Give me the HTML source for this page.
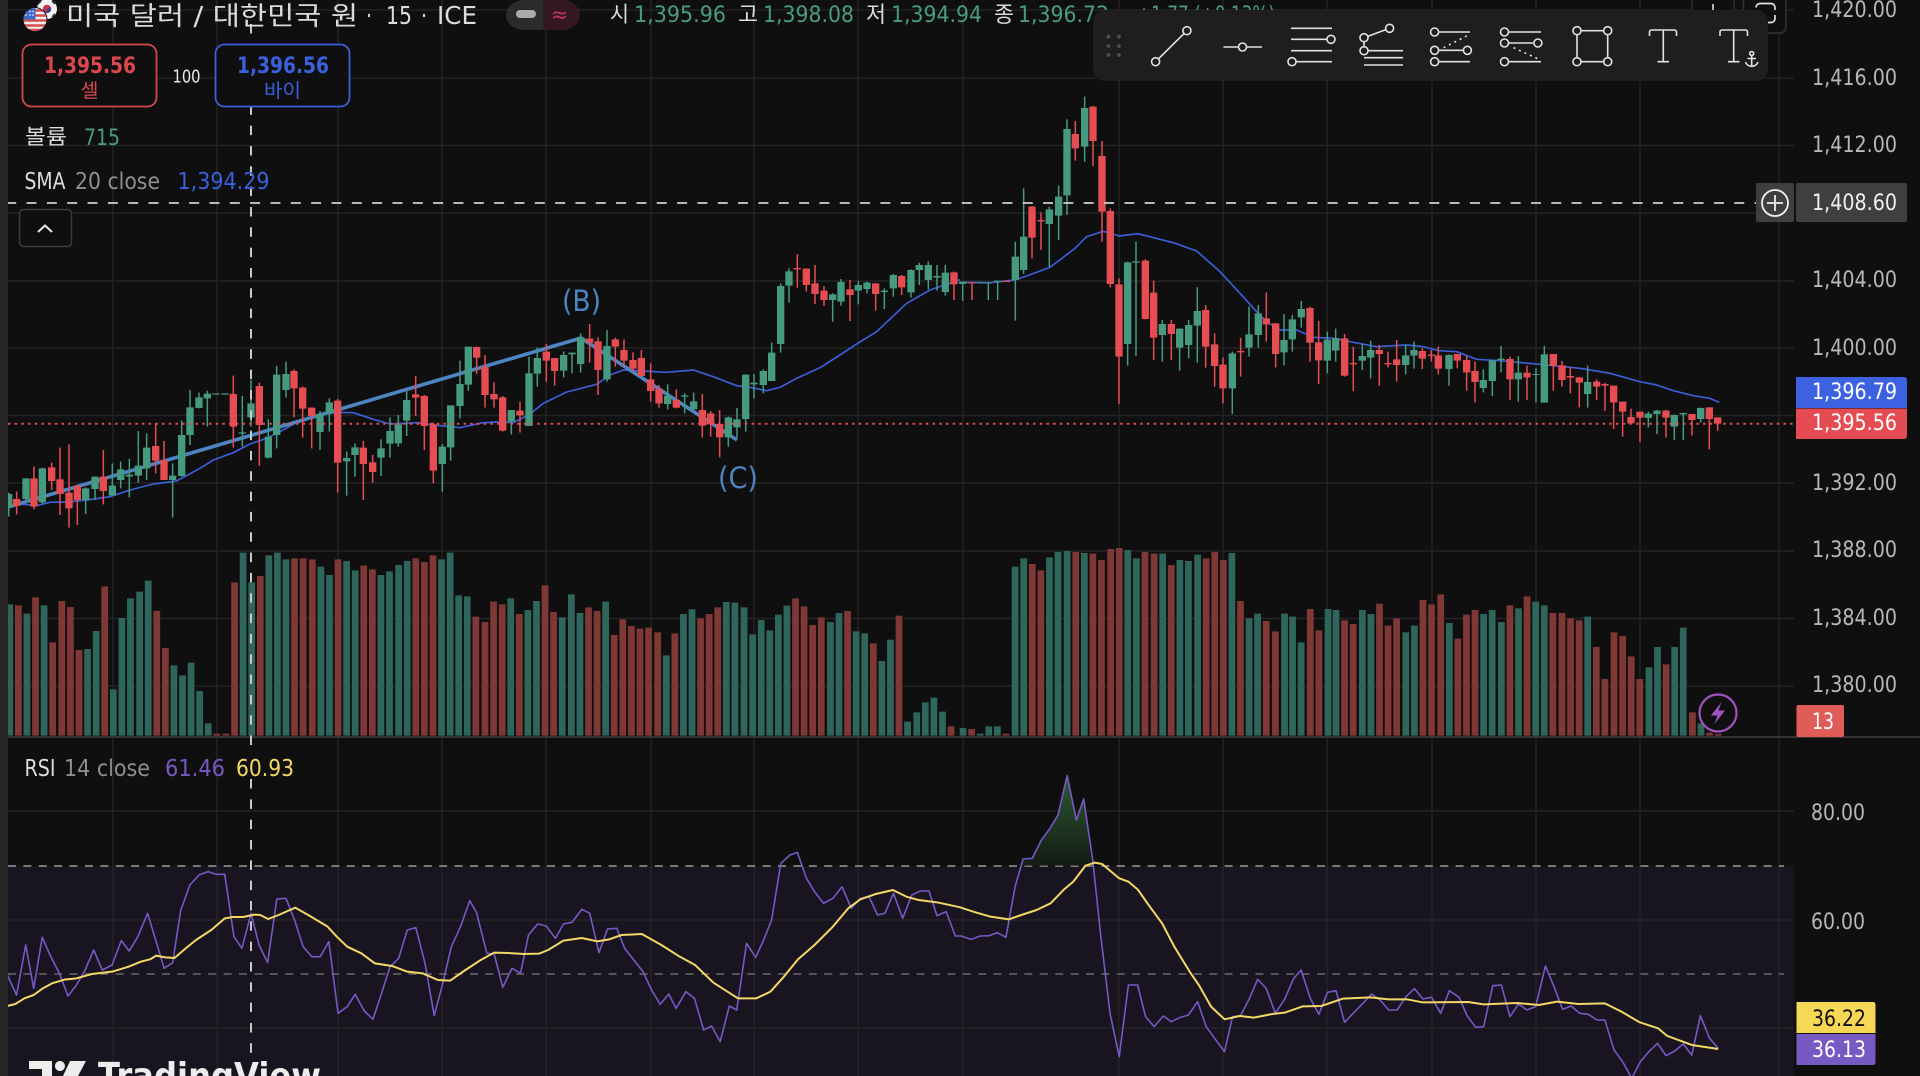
<!DOCTYPE html>
<html lang="ko">
<head>
<meta charset="utf-8">
<title>미국 달러 / 대한민국 원</title>
<style>
html,body{margin:0;padding:0;background:#0f0f0f;width:1920px;height:1076px;overflow:hidden}
svg{display:block;filter:blur(.35px)}
text{font-family:"DejaVu Sans","Noto Sans CJK KR",sans-serif}
.gw{fill:none;stroke:#459a80;stroke-width:4.5}
.gb{fill:none;stroke:#459a80;stroke-width:22}
.rw{fill:none;stroke:#e64d53;stroke-width:4.5}
.rb{fill:none;stroke:#e64d53;stroke-width:22}
.sma{fill:none;stroke:#3a5fd8;stroke-width:5;stroke-linejoin:round}
.vg{fill:none;stroke:#2e665b;stroke-width:11}
.vr{fill:none;stroke:#7f3835;stroke-width:11}
.rsi{fill:none;stroke:#7659c4;stroke-width:1.6;vector-effect:non-scaling-stroke;stroke-linejoin:round}
.rma{fill:none;stroke:#f4d865;stroke-width:2;vector-effect:non-scaling-stroke;stroke-linejoin:round}
.ic{fill:none;stroke:#e2e2e2;stroke-width:1.6}
.ic circle{fill:#1e1e1e}
.ax{fill:#b8b8b8;font-size:22px}
</style>
</head>
<body>
<svg width="1920" height="1076" viewBox="0 0 1920 1076" xmlns="http://www.w3.org/2000/svg">
<defs>
<linearGradient id="ob" x1="0" y1="0" x2="0" y2="1"><stop offset="0" stop-color="#2b5a33"/><stop offset="1" stop-color="#141b14"/></linearGradient>
</defs>
<rect width="1920" height="1076" fill="#0f0f0f"/>
<rect x="8" y="866" width="1786" height="210" fill="#181420"/>

<!-- vertical grid -->
<path stroke="#232323" stroke-width="1.5" fill="none" d="M113 0V1076M217 0V1076M338 0V1076M442 0V1076M546 0V1076M651 0V1076M754 0V1076M858 0V1076M963 0V1076M1119 0V1076M1223 0V1076M1327 0V1076M1432 0V1076M1536 0V1076M1640 0V1076M1779 0V1076"/>
<!-- horizontal grid -->
<path stroke="#242424" stroke-width="1.5" fill="none" d="M8 10H1794M8 78H1794M8 145.500H1794M8 213H1794M8 281H1794M8 348H1794M8 415.500H1794M8 483H1794M8 551H1794M8 618.500H1794M8 686H1794M8 811H1794M8 920H1794M8 1028H1794"/>

<!-- volume -->
<g transform="translate(0,540) scale(.6124,.33333)">
<path class="vg" d="M16 587V193M44 587V221M72 587V196M143 587V327M157 587V273M185 587V448M199 587V234M213 587V175M228 587V155M242 587V122M284 587V376M298 587V406M312 587V368M326 587V453M340 587V550M397 587V38M411 587V127M439 587V46M453 587V38M467 587V58M524 587V80M538 587V105M566 587V63M580 587V91M622 587V105M636 587V94M651 587V75M665 587V63M721 587V58M735 587V38M749 587V166M763 587V169M834 587V175M862 587V210M876 587V183M918 587V232M933 587V163M947 587V219M989 587V185M1088 587V346M1116 587V222M1130 587V208M1186 587V186M1200 587V188M1215 587V202M1229 587V283M1243 587V240M1257 587V271M1271 587V224M1285 587V197M1356 587V246M1370 587V219M1398 587V274M1412 587V280M1440 587V363M1454 587V299M1482 587V545M1497 587V517M1511 587V487M1525 587V473M1539 587V515"/>
<path class="vr" d="M30 587V196M58 587V172M86 587V307M101 587V183M115 587V201M129 587V330M171 587V139M256 587V213M270 587V324M354 587V581M369 587V581M383 587V127M425 587V108M481 587V55M495 587V55M510 587V58M552 587V58M594 587V77M608 587V88M679 587V55M693 587V66M707 587V46M777 587V230M792 587V246M806 587V185M820 587V193M848 587V222M890 587V136M904 587V216M961 587V202M975 587V213M1003 587V285M1017 587V238M1031 587V258M1045 587V266M1059 587V263M1074 587V277M1102 587V280M1144 587V235M1158 587V222M1172 587V202M1299 587V175M1313 587V199M1327 587V255M1341 587V232M1384 587V213M1426 587V310M1468 587V227M1553 587V559"/>
</g>
<g transform="translate(960,540) scale(.6124,.33333)">
<path class="vg" d="M5 587V564M33 587V581M47 587V559M61 587V559M90 587V80M104 587V55M146 587V52M160 587V36M175 587V33M203 587V39M274 587V30M288 587V55M331 587V41M359 587V60M373 587V63M388 587V44M444 587V39M472 587V235M486 587V221M530 587V221M543 587V230M557 587V307M601 587V207M614 587V210M657 587V210M671 587V222M728 587V277M742 587V257M799 587V249M855 587V222M869 587V210M884 587V246M912 587V205M940 587V185M954 587V196M1025 587V230M1125 587V382M1139 587V321M1167 587V321M1181 587V263M1210 587V550"/>
<path class="vr" d="M19 587V567M75 587V581M118 587V72M132 587V91M189 587V36M217 587V41M231 587V60M246 587V27M260 587V24M302 587V36M317 587V41M345 587V75M402 587V55M416 587V36M430 587V60M458 587V183M500 587V243M515 587V274M572 587V207M586 587V271M628 587V241M642 587V252M685 587V191M699 587V257M713 587V235M756 587V180M770 587V193M785 587V163M813 587V296M827 587V224M841 587V210M898 587V196M926 587V169M968 587V219M983 587V219M997 587V235M1011 587V241M1039 587V321M1053 587V417M1068 587V277M1082 587V288M1096 587V349M1110 587V417M1153 587V373M1196 587V517M1224 587V578M1238 587V582"/>
</g>
<rect x="8" y="736" width="1912" height="2" fill="#343434"/>

<!-- SMA -->
<g transform="scale(.33333)">
<polyline class="sma" transform="translate(0,900)" points="22,623 60,612 110,617 150,607 200,606 260,600 330,590 390,570 460,552 530,543 600,505 640,480 700,458 750,432 800,415 840,395 900,362 960,345 1010,337 1060,338 1120,358 1170,372 1250,368 1310,376 1380,383 1440,370"/>
<polyline class="sma" transform="translate(1440,720)" points="0,549 50,546 100,548 150,522 190,490 260,456 350,433 390,405 430,390 470,392 560,397 640,390 700,410 770,437 810,442 860,452 900,442 950,415 1020,383 1080,345 1130,312 1190,275 1280,190 1350,150 1440,119"/>
<polyline class="sma" transform="translate(2880,270)" points="0,577 90,578 165,570 200,558 270,532 345,475 380,440 430,424 478,438 533,431 640,458 710,483 780,545 840,610 890,665 920,695 960,720 1010,720 1060,742 1120,745 1180,757 1250,770 1340,765 1390,770 1440,783"/>
<polyline class="sma" transform="translate(4320,960)" points="0,92 50,95 110,118 180,122 300,133 420,145 510,160 600,185 650,195 700,212 760,227 810,235 838,247"/>
</g>

<!-- drawing -->
<polyline points="8,507 581,338 737,440" fill="none" stroke="#4d84c2" stroke-width="3.6" stroke-linejoin="miter"/>
<text x="562" y="311" font-size="29" textLength="39" lengthAdjust="spacingAndGlyphs" fill="#4d84c2">(B)</text>
<text x="718" y="488" font-size="29" textLength="40" lengthAdjust="spacingAndGlyphs" fill="#4d84c2">(C)</text>

<!-- candles -->
<g transform="scale(.33333)">
<g transform="translate(0,900)">
<path class="gw" d="M26 578V650M78 535V603M127 503V610M257 562V642M285 530V600M337 490V587M362 485V565M388 476V592M415 393V548M440 400V540M518 490V653M545 362V530M570 270V435M597 278V325M622 272V380M727 288V440M753 240V380M805 358V475M830 198V445M858 185V293M960 333V450M988 295V395M1040 455V587M1065 430V530M1143 418V528M1170 352V473M1195 345V440M1220 270V408M1327 432V575M1352 316V482M1380 182V356M1405 140V272"/>
<path class="gb" d="M26 582V622M78 535V597M127 505V607M257 565V600M285 530V567M337 557V587M362 508V540M388 524V530M415 497V527M440 443V505M518 527V540M545 405V528M570 322V405M597 292V324M622 281V295M648 280V284M675 280V284M727 397V401M753 310V352M805 410V473M830 224V405M858 222V270M960 342V396M988 307V340M1040 474V484M1065 442V465M1143 445V473M1170 393V431M1195 373V430M1220 300V362M1327 440V492M1352 316V442M1380 252V318M1405 140V254"/>
<path class="rw" d="M50 575V643M102 500V628M155 488V570M180 443V645M207 433V683M232 555V675M310 450V613M467 370V520M492 423V540M700 227V443M778 248V497M882 208V352M908 260V413M935 322V445M1013 297V578M1090 423V600M1118 465V548M1247 228V348M1273 285V450M1300 368V550M1430 140V222"/>
<path class="rb" d="M50 597V618M102 535V620M155 502V543M180 538V582M207 578V625M232 558V600M310 530V573M467 438V482M492 480V540M700 282V380M778 258V375M882 213V265M908 263V326M935 323V348M1013 302V488M1090 443V492M1118 487V516M1247 283V293M1273 288V378M1300 373V512M1430 141V173"/>
</g>
<g transform="translate(1440,720)">
<path class="gw" d="M94 510V583M147 350V558M172 322V440M251 335V412M276 338V400M302 280V398M381 270V425M563 433V508M614 460V520M641 458V510M745 530V620M771 504V592M797 403V575M822 402V475M850 388V460M875 308V423M902 130V338M927 85V188M1058 160V245M1083 117V197M1135 122V193M1161 125V160M1213 145V207M1240 102V170M1293 88V173M1318 68V135M1345 64V148M1371 75V152M1396 75V167"/>
<path class="gb" d="M94 510V545M147 400V558M172 354V401M251 345V392M276 338V343M302 292V372M381 318V418M563 468V492M614 466V470M641 484V508M745 532V592M771 538V562M797 404V537M822 428V433M850 393V435M875 338V423M902 138V312M927 94V137M1058 163V180M1083 126V185M1135 135V152M1161 128V147M1213 152V156M1240 105V145M1293 90V157M1318 75V90M1345 75V120M1371 108V113M1396 98V156"/>
<path class="rw" d="M15 345V503M42 427V503M68 468V575M120 485V578M199 312V425M224 354V437M329 252V368M354 292V465M406 293V380M432 298V380M459 337V395M484 330V410M512 370V485M537 435V503M589 448V505M667 462V593M692 513V590M719 510V652M952 42V143M979 85V155M1005 75V192M1032 138V198M1110 120V243M1187 130V212M1265 105V165M1422 95V180"/>
<path class="rb" d="M15 380V465M42 462V478M68 472V572M120 512V526M199 335V362M224 354V393M329 296V308M354 304V390M406 298V320M432 330V362M459 360V386M484 354V408M512 418V453M537 447V490M589 480V503M667 510V557M692 520V553M719 552V592M952 84V88M979 86V135M1005 130V162M1032 152V180M1110 148V165M1187 130V162M1265 108V142M1422 97V133"/>
</g>
<g transform="translate(2880,270)">
<path class="gw" d="M8 575V632M85 577V630M113 572V630M166 455V692M191 295V552M268 350V530M296 287V450M321 88V375M374 20V215M503 515V827M528 455V798M607 690V815M659 715V842M686 690V805M712 592V818M817 785V972M867 650V800M895 645V773M972 672V826M997 675V785M1024 633V713M1102 725V850M1127 716V815M1207 762V840M1232 752V865M1337 765V853M1362 755V836"/>
<path class="gb" d="M8 575V582M62 577V580M85 577V580M113 572V576M166 500V570M191 440V540M268 358V402M296 320V377M321 117V316M374 54V170M503 517V762M528 514V518M607 702V735M659 716V773M686 705V765M712 663V707M817 790V895M867 733V773M895 670V735M972 750V787M997 688V748M1024 657V682M1102 749V812M1127 744V782M1207 798V812M1232 780V803M1337 796V825M1362 780V797"/>
<path class="rw" d="M36 578V630M216 348V505M243 367V480M346 93V212M399 48V228M426 153V455M451 355V592M477 565V942M556 508V688M581 572V810M634 690V810M737 645V833M764 730V890M789 802V940M842 743V860M919 607V755M947 700V832M1050 650V815M1076 693V882M1154 732V860M1180 770V903M1258 765V887M1284 785V832M1310 750V875M1387 775V837M1414 780V815M1435 770V853"/>
<path class="rb" d="M36 577V580M140 572V576M216 350V443M243 390V394M346 132V175M399 50V153M426 198V365M451 363V582M477 583V800M556 512V687M581 608V743M634 702V732M737 660V770M764 763V828M789 824V895M842 783V787M919 685V703M947 700V792M1050 654V758M1076 757V811M1154 745V857M1180 819V823M1258 780V792M1284 819V823M1310 808V825M1387 783V806M1414 794V798M1435 796V836"/>
</g>
<g transform="translate(4320,960)">
<path class="gw" d="M27 103V197M130 148V217M157 120V228M183 78V157M235 108V245M288 145V247M313 78V248M443 137V263M625 275V322M651 270V342M703 283V360M730 278V360M782 263V308"/>
<path class="gb" d="M27 105V147M130 180V204M157 121V183M183 116V120M235 158V178M288 162V165M313 103V248M443 186V222M625 281V294M651 272V282M703 285V320M730 279V283M782 264V297"/>
<path class="rw" d="M52 102V145M80 108V212M105 125V247M210 110V240M261 137V240M340 102V212M366 123V200M391 140V220M418 172V262M470 178V240M495 188V273M521 197V327M548 245V350M573 266V312M600 275V366M678 270V353M756 282V347M808 262V388M833 292V333"/>
<path class="rb" d="M52 102V122M80 120V157M105 153V186M210 117V178M261 158V172M340 102V138M366 136V180M391 168V173M418 172V188M470 185V200M495 192V197M521 197V247M548 245V275M573 291V310M600 275V293M678 272V293M756 282V300M808 262V297M833 292V311"/>
</g>
</g>

<!-- last price dotted -->
<path d="M8 423.700H1794" stroke="#e64d53" stroke-width="2" stroke-dasharray="2.400 4.300" fill="none"/>

<!-- RSI -->
<path d="M8 866H1784" stroke="#9a9a9a" stroke-width="1.6" stroke-dasharray="8 7.400" fill="none"/>
<path d="M8 974H1784" stroke="#6a6a6a" stroke-width="1.6" stroke-dasharray="8 7.400" fill="none"/>
<g transform="translate(960,750) scale(.6124,.33333)">
<polygon fill="url(#ob)" points="100,347 103,327 118,325 133,270 147,235 160,195 175,77 190,210 202,147 215,347"/>
</g>
<g transform="translate(0,750) scale(.6124,.33333)">
<polyline class="rsi" points="12,675 27,735 42,585 55,715 69,562 83,620 97,670 111,738 125,705 139,660 153,600 167,660 183,645 198,572 211,603 225,560 241,490 255,575 268,655 282,638 295,482 310,405 325,375 340,365 353,373 367,373 382,560 395,595 410,490 423,585 437,638 452,447 467,445 481,510 495,590 509,620 523,620 537,575 552,790 567,770 580,733 595,783 609,808 623,730 637,650 651,625 665,540 679,533 694,640 709,797 723,700 737,590 752,530 767,452 778,487 795,610 807,612 821,712 836,655 850,670 863,555 878,522 892,528 907,565 920,522 934,517 950,478 963,490 978,608 992,537 1007,535 1020,595 1035,630 1050,665 1064,720 1078,763 1092,732 1104,775 1120,725 1134,745 1149,840 1162,828 1176,875 1191,768 1203,780 1219,580 1234,622 1247,570 1260,510 1275,340 1290,315 1302,307 1317,385 1330,425 1345,460 1360,445 1375,410 1390,475 1405,445 1419,440 1433,495 1445,490 1459,430 1474,505 1489,435 1503,423 1517,423 1530,497 1545,485 1560,558 1568,558"/>
<polyline class="rma" points="12,768 25,762 40,745 55,735 70,715 85,700 105,689 125,685 150,672 183,665 210,650 230,635 245,628 255,617 270,622 285,624 300,600 320,570 345,540 367,505 380,501 397,501 415,494 425,495 438,507 455,495 482,473 505,497 535,530 550,560 567,590 590,610 612,640 640,648 665,665 690,670 715,690 735,692 760,660 785,630 807,608 830,609 855,612 880,611 895,600 920,572 950,564 975,574 995,568 1015,555 1048,552 1080,585 1110,620 1135,645 1165,698 1205,745 1235,745 1258,725 1280,680 1303,628 1330,585 1360,530 1385,475 1405,448 1430,432 1458,420 1480,440 1500,450 1530,457 1568,472"/>
</g>
<g transform="translate(960,750) scale(.6124,.33333)">
<polyline class="rsi" points="0,557 18,568 33,558 48,557 61,548 75,562 90,410 103,327 118,325 133,270 147,235 160,195 175,77 190,210 202,147 217,335 230,560 245,790 260,920 275,705 290,705 303,800 317,830 332,798 345,815 360,802 373,795 388,755 402,830 417,868 432,905 445,800 458,797 472,748 486,688 500,715 515,790 530,748 545,685 557,660 572,745 586,793 600,727 614,722 628,817 642,790 658,760 672,732 686,750 700,780 714,780 728,740 742,716 756,747 770,742 785,790 799,722 815,742 828,797 842,832 855,830 870,707 884,705 898,800 912,762 926,780 940,770 956,648 970,710 984,778 998,768 1012,790 1026,793 1040,810 1053,810 1068,900 1082,935 1097,985 1111,935 1125,905 1139,880 1153,917 1167,903 1181,882 1195,915 1209,797 1224,865 1238,895"/>
<polyline class="rma" points="0,472 25,487 50,500 80,508 100,495 125,480 148,460 170,418 185,395 205,347 220,338 232,342 260,385 275,395 290,418 310,470 330,520 350,590 375,665 390,705 410,770 432,808 457,798 480,803 510,792 530,788 560,769 590,768 625,746 670,742 700,748 730,748 755,757 830,756 855,763 910,759 945,765 975,755 1010,762 1053,760 1080,785 1110,817 1140,835 1155,858 1195,885 1238,897"/>
</g>

<!-- crosshair -->
<path d="M251 24V747" stroke="#c9c9c9" stroke-width="2" stroke-dasharray="9.500 10.830" fill="none"/>
<path d="M251 779V1055" stroke="#c9c9c9" stroke-width="2" stroke-dasharray="9.500 10.830" fill="none"/>
<path d="M6.200 203H1756" stroke="#d0d0d0" stroke-width="1.8" stroke-dasharray="10 10.330" fill="none"/>

<!-- left strip -->
<rect x="0" width="8" height="1076" fill="#272727"/>

<!-- top-right hidden controls -->
<rect x="1692" y="-10" width="42" height="43" rx="5" fill="#0f0f0f" stroke="#2d2d2d" stroke-width="1.5"/>
<rect x="1743.500" y="-10" width="42.500" height="43" rx="6" fill="#0f0f0f" stroke="#333" stroke-width="1.5"/>
<path d="M1713 4V10" stroke="#ddd" stroke-width="1.6"/>
<path d="M1756 7V7.500A4 4 0 0 1 1760 3.500H1771A4 4 0 0 1 1775 7.500V10M1775 15V18.500A4 4 0 0 1 1771 22.500H1762" fill="none" stroke="#e2e2e2" stroke-width="1.7"/>

<!-- header -->
<g>
<clipPath id="kr"><circle cx="47" cy="9" r="10"/></clipPath>
<g clip-path="url(#kr)"><rect x="36" y="-2" width="22" height="22" fill="#f2f2f2"/><circle cx="47" cy="9" r="4.200" fill="#c9304a"/><path d="M43 10a4.200 4.200 0 0 0 8 0a2 2 0 0 0-4 0a2 2 0 0 1-4 0z" fill="#2a4c94"/><path d="M38 4l3-3M52 1l3 3M38 14l3 3M52 17l3-3" stroke="#333" stroke-width="1.6"/></g>
<circle cx="35" cy="19.500" r="12.500" fill="#0f0f0f"/>
<clipPath id="us"><circle cx="35" cy="19.500" r="11.500"/></clipPath>
<g clip-path="url(#us)"><rect x="23" y="8" width="24" height="24" fill="#f1eeee"/><path d="M23 10.500H47M23 15.500H47M23 20.500H47M23 25.500H47M23 30H47" stroke="#d94b4b" stroke-width="2.600"/><rect x="23" y="8" width="12.500" height="11.500" fill="#3c6bc9"/><path d="M26 11.500h.01M30 11.500h.01M33 11.500h.01M26 15h.01M30 15h.01M33 15h.01" stroke="#fff" stroke-width="1.6" stroke-linecap="round"/></g>
</g>
<text x="66" y="25" font-size="26" textLength="292" lengthAdjust="spacingAndGlyphs" fill="#dcdcdc">미국 달러 / 대한민국 원</text>
<text x="366" y="24" font-size="25" textLength="6" lengthAdjust="spacingAndGlyphs" fill="#dcdcdc">·</text>
<text x="386" y="24" font-size="25" textLength="26" lengthAdjust="spacingAndGlyphs" fill="#dcdcdc">15</text>
<text x="421" y="24" font-size="25" textLength="6" lengthAdjust="spacingAndGlyphs" fill="#dcdcdc">·</text>
<text x="437" y="24" font-size="25" textLength="40" lengthAdjust="spacingAndGlyphs" fill="#dcdcdc">ICE</text>

<path d="M543 0H524A18 15 0 0 0 506 15A18 15 0 0 0 524 30H543Z" fill="#2b2b2b"/>
<path d="M543 0H562A18 15 0 0 1 580 15A18 15 0 0 1 562 30H543Z" fill="#33191f"/>
<rect x="516" y="10" width="20" height="8" rx="4" fill="#a9a9a9"/>
<text x="551" y="22" font-size="22" textLength="17" lengthAdjust="spacingAndGlyphs" fill="#c4336a">≈</text>

<text x="610" y="22" font-size="22" textLength="19" lengthAdjust="spacingAndGlyphs" fill="#dcdcdc">시</text>
<text x="634" y="22" font-size="22" textLength="92" lengthAdjust="spacingAndGlyphs" fill="#4a9a84">1,395.96</text>
<text x="738" y="22" font-size="22" textLength="20" lengthAdjust="spacingAndGlyphs" fill="#dcdcdc">고</text>
<text x="763" y="22" font-size="22" textLength="91" lengthAdjust="spacingAndGlyphs" fill="#4a9a84">1,398.08</text>
<text x="866" y="22" font-size="22" textLength="20" lengthAdjust="spacingAndGlyphs" fill="#dcdcdc">저</text>
<text x="891" y="22" font-size="22" textLength="91" lengthAdjust="spacingAndGlyphs" fill="#4a9a84">1,394.94</text>
<text x="994" y="22" font-size="22" textLength="20" lengthAdjust="spacingAndGlyphs" fill="#dcdcdc">종</text>
<text x="1018" y="22" font-size="22" textLength="91" lengthAdjust="spacingAndGlyphs" fill="#4a9a84">1,396.72</text>
<text x="1137" y="22" font-size="22" textLength="138" lengthAdjust="spacingAndGlyphs" fill="#4a9a84">+1.77 (+0.13%)</text>

<!-- trade buttons -->
<rect x="22.500" y="44.500" width="134" height="62" rx="9" fill="#0f0f0f" stroke="#d4474b" stroke-width="1.8"/>
<text x="44" y="73" font-size="22" font-weight="700" textLength="92" lengthAdjust="spacingAndGlyphs" fill="#d9484c">1,395.56</text>
<text x="80.500" y="97" font-size="19" textLength="18" lengthAdjust="spacingAndGlyphs" fill="#d9484c">셀</text>
<text x="172.500" y="82.500" font-size="18" textLength="28" lengthAdjust="spacingAndGlyphs" fill="#e8e8e8">100</text>
<rect x="215.500" y="44.500" width="134" height="62" rx="9" fill="#0f0f0f" stroke="#3a60dc" stroke-width="1.8"/>
<text x="237" y="73" font-size="22" font-weight="700" textLength="92" lengthAdjust="spacingAndGlyphs" fill="#3a60dc">1,396.56</text>
<text x="264" y="97" font-size="19" textLength="37" lengthAdjust="spacingAndGlyphs" fill="#3a60dc">바이</text>

<!-- legends -->
<text x="25" y="144" font-size="21" textLength="42" lengthAdjust="spacingAndGlyphs" fill="#dcdcdc">볼륨</text>
<text x="84" y="145" font-size="22" textLength="36" lengthAdjust="spacingAndGlyphs" fill="#4a9a84">715</text>
<text x="24.500" y="189" font-size="23" textLength="41" lengthAdjust="spacingAndGlyphs" fill="#dcdcdc">SMA</text>
<text x="75" y="189" font-size="23" textLength="85" lengthAdjust="spacingAndGlyphs" fill="#8f8f8f">20 close</text>
<text x="177.500" y="189" font-size="23" textLength="92" lengthAdjust="spacingAndGlyphs" fill="#3a60dc">1,394.29</text>
<rect x="19.500" y="209.500" width="52" height="37" rx="4" fill="#0f0f0f" stroke="#3c3c3c" stroke-width="1.5"/>
<path d="M38 232L45 225.500L52 232" fill="none" stroke="#e8e8e8" stroke-width="2"/>
<text x="24.500" y="776" font-size="23" textLength="31" lengthAdjust="spacingAndGlyphs" fill="#dcdcdc">RSI</text>
<text x="64" y="776" font-size="23" textLength="86" lengthAdjust="spacingAndGlyphs" fill="#8f8f8f">14 close</text>
<text x="165" y="776" font-size="23" textLength="60" lengthAdjust="spacingAndGlyphs" fill="#7659c4">61.46</text>
<text x="236" y="776" font-size="23" textLength="58" lengthAdjust="spacingAndGlyphs" fill="#f4d865">60.93</text>

<!-- toolbar -->
<rect x="1093" y="10" width="675" height="71" rx="12" fill="#1e1e1e"/>
<g fill="#4f4f4f"><circle cx="1108.500" cy="36.700" r="1.900"/><circle cx="1119" cy="36.700" r="1.900"/><circle cx="1108.500" cy="46" r="1.900"/><circle cx="1119" cy="46" r="1.900"/><circle cx="1108.500" cy="55" r="1.900"/><circle cx="1119" cy="55" r="1.900"/></g>
<g class="ic">
<path d="M1155.600 61.700L1186.900 30.700"/><circle cx="1155.600" cy="61.700" r="4"/><circle cx="1186.900" cy="30.700" r="4"/>
<path d="M1223.400 47H1262"/><circle cx="1242.500" cy="47" r="4"/>
<path d="M1291 28.300H1332M1291 39.300H1331M1291 50.700H1332M1292 61.700H1332"/><circle cx="1331" cy="39.300" r="4"/><circle cx="1292" cy="61.700" r="4"/>
<path d="M1364 37.700L1389.600 28.300M1364 37.700V50.700M1364 50.700H1403M1364 57.700H1403M1364 65H1403"/><circle cx="1389.600" cy="28.300" r="4"/><circle cx="1364" cy="37.700" r="4"/><circle cx="1364" cy="50.700" r="4"/>
<path d="M1434.600 32H1470M1434.600 50.300H1467M1434.600 61.700H1470"/><path d="M1443.600 47.700L1468.500 35" stroke-dasharray="2 4"/><circle cx="1434.600" cy="32" r="4"/><circle cx="1434.600" cy="50.300" r="4"/><circle cx="1467.400" cy="50.300" r="4"/><circle cx="1434.600" cy="61.700" r="4"/>
<path d="M1504.500 32H1541M1504.500 43H1538M1504.500 61.700H1541"/><path d="M1513.500 47.700L1539 59.300" stroke-dasharray="2 4"/><circle cx="1504.500" cy="32" r="4"/><circle cx="1504.500" cy="43" r="4"/><circle cx="1537.900" cy="43" r="4"/><circle cx="1504.500" cy="61.700" r="4"/>
<rect x="1577" y="30.700" width="30.700" height="31"/><circle cx="1577" cy="30.700" r="4"/><circle cx="1607.700" cy="30.700" r="4"/><circle cx="1577" cy="61.700" r="4"/><circle cx="1607.700" cy="61.700" r="4"/>
<path d="M1649.500 36V32A2 2 0 0 1 1651.500 30H1674.500A2 2 0 0 1 1676.500 32V36M1663.300 30V61.700M1657.500 61.700H1669"/>
<path d="M1720 36V32A2 2 0 0 1 1722 30H1745.500A2 2 0 0 1 1747.500 32V36M1733.700 30V61.700M1728 61.700H1739.500"/>
<circle cx="1751.700" cy="53.500" r="2"/><path d="M1751.700 55.500V67M1747.500 58.500H1756M1745.500 62A6.500 6 0 0 0 1758 62"/>
</g>

<!-- price scale -->
<text class="ax" x="1812" y="17" textLength="85" lengthAdjust="spacingAndGlyphs">1,420.00</text>
<text class="ax" x="1812" y="85" textLength="85" lengthAdjust="spacingAndGlyphs">1,416.00</text>
<text class="ax" x="1812" y="152" textLength="85" lengthAdjust="spacingAndGlyphs">1,412.00</text>
<text class="ax" x="1812" y="287" textLength="85" lengthAdjust="spacingAndGlyphs">1,404.00</text>
<text class="ax" x="1812" y="355" textLength="85" lengthAdjust="spacingAndGlyphs">1,400.00</text>
<text class="ax" x="1812" y="490" textLength="85" lengthAdjust="spacingAndGlyphs">1,392.00</text>
<text class="ax" x="1812" y="557" textLength="85" lengthAdjust="spacingAndGlyphs">1,388.00</text>
<text class="ax" x="1812" y="625" textLength="85" lengthAdjust="spacingAndGlyphs">1,384.00</text>
<text class="ax" x="1812" y="692" textLength="85" lengthAdjust="spacingAndGlyphs">1,380.00</text>
<text class="ax" x="1811" y="820" textLength="54" lengthAdjust="spacingAndGlyphs">80.00</text>
<text class="ax" x="1811" y="929" textLength="54" lengthAdjust="spacingAndGlyphs">60.00</text>

<rect x="1756" y="183" width="38" height="39" rx="2" fill="#3f3f3f"/>
<circle cx="1775" cy="203" r="13" fill="none" stroke="#f0f0f0" stroke-width="1.8"/>
<path d="M1775 195V211M1767 203H1783" stroke="#f0f0f0" stroke-width="1.8"/>
<rect x="1796" y="183" width="111" height="39" rx="2" fill="#3f3f3f"/>
<text x="1812" y="210" font-size="22" textLength="85" lengthAdjust="spacingAndGlyphs" fill="#f0f0f0">1,408.60</text>

<path d="M1796 377H1904A3 3 0 0 1 1907 380V408H1796Z" fill="#3c62e2"/>
<path d="M1796 408.500H1907V436A3 3 0 0 1 1904 439H1796Z" fill="#e54b52"/>
<text x="1812" y="399" font-size="22" textLength="85" lengthAdjust="spacingAndGlyphs" fill="#fff">1,396.79</text>
<text x="1812" y="430" font-size="22" textLength="85" lengthAdjust="spacingAndGlyphs" fill="#fff">1,395.56</text>

<rect x="1796.500" y="705" width="47.500" height="32" rx="2" fill="#e05c59"/>
<text x="1812" y="729" font-size="22" textLength="22" lengthAdjust="spacingAndGlyphs" fill="#fff">13</text>

<circle cx="1718" cy="713" r="18.500" fill="#0f0f0f" stroke="#a152c2" stroke-width="2.200"/>
<path d="M1721.500 702L1711 715.500H1717.500L1714.500 724L1725 710.500H1718.500Z" fill="#a152c2"/>

<path d="M1796.500 1002H1873A2.500 2.500 0 0 1 1875.500 1004.500V1033H1796.500Z" fill="#f6d855"/>
<path d="M1796.500 1034H1875.500V1062.500A2.500 2.500 0 0 1 1873 1065H1796.500Z" fill="#7759c4"/>
<text x="1812" y="1026" font-size="22" textLength="54" lengthAdjust="spacingAndGlyphs" fill="#111">36.22</text>
<text x="1812" y="1057" font-size="22" textLength="54" lengthAdjust="spacingAndGlyphs" fill="#fff">36.13</text>

<!-- logo -->
<path d="M29 1061H52V1076H42V1069H29ZM70 1061H86L78 1076H63ZM60 1061A5 5 0 1 1 59.900 1061Z" fill="#ededed"/>
<text x="98" y="1088" font-size="36" font-weight="700" textLength="223" lengthAdjust="spacingAndGlyphs" fill="#ededed">TradingView</text>
</svg>
</body>
</html>
